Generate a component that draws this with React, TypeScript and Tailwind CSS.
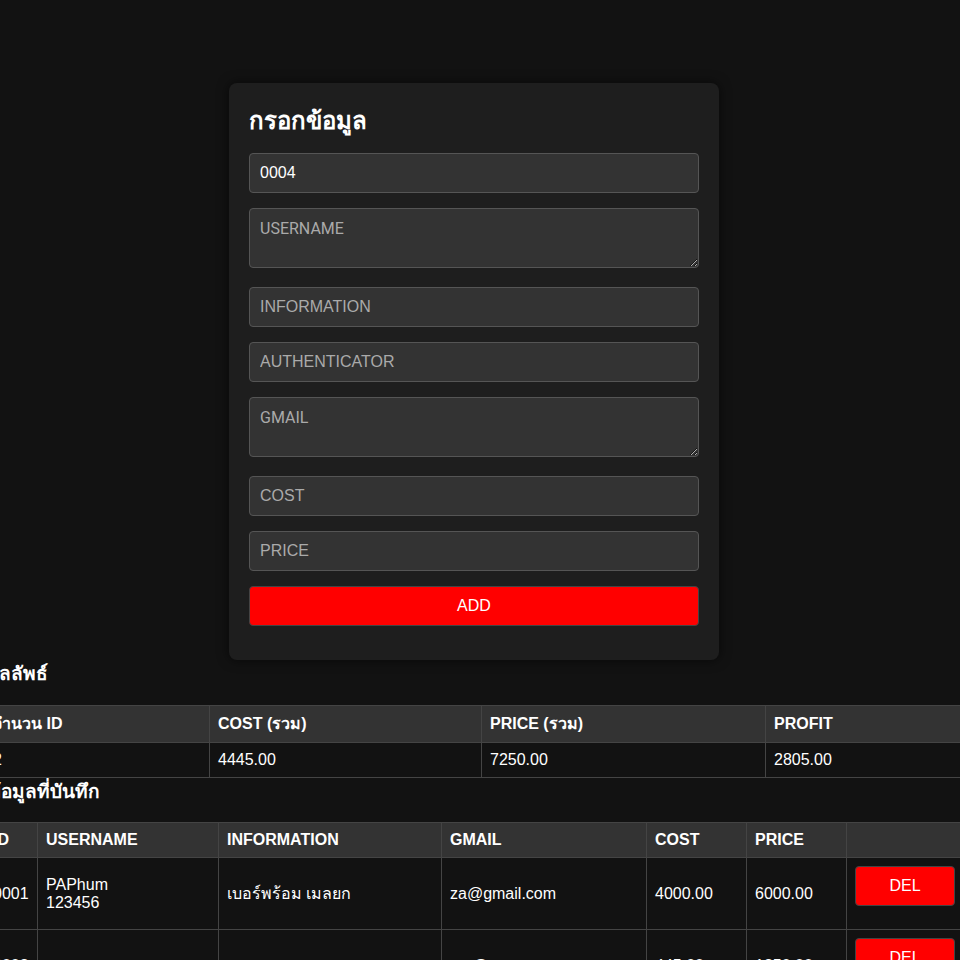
const summary = { count: "2", cost: "4445.00", price: "7250.00", profit: "2805.00" };

const records = [
  {
    id: "0001",
    username: "PAPhum\n123456",
    information: "เบอร์พร้อม เมลยก",
    gmail: "za@gmail.com",
    cost: "4000.00",
    price: "6000.00",
  },
  {
    id: "0002",
    username: "ruaman",
    information: "เมล",
    gmail: "ma@am.co",
    cost: "445.00",
    price: "1250.00",
  },
];

const inputCls =
  "mb-[15px] block h-[40px] w-[450px] rounded-[4px] border border-[#555] bg-[#333] px-[10px] text-[16px] text-white outline-none placeholder:text-[#aaa]";
const areaCls =
  "mb-[19px] block h-[60px] w-[450px] rounded-[4px] border border-[#555] bg-[#333] px-[10px] py-[10px] font-['Roboto'] text-[16px] leading-[20px] text-white outline-none placeholder:text-[#aaa]";

const th = "border border-[#444] bg-[#333] px-2 py-2 text-left font-bold align-middle";
const td = "border border-[#444] px-2 py-2 align-middle";

const App = () => {
  return (
    <div
      className="min-h-screen w-full overflow-x-hidden bg-[#121212] text-white"
      style={{ fontFamily: '"Liberation Sans", Arial, "Noto Sans", "DejaVu Sans", sans-serif' }}
    >
      <div className="flex w-[948px] flex-col items-center pt-[83px] pb-10">
        {/* FORM CARD */}
        <div className="w-[490px] shrink-0 rounded-[8px] bg-[#1e1e1e] px-5 pt-5 pb-[19px] shadow-[0_0_12px_rgba(0,0,0,0.6)]">
          <h2 className="mb-[15px] h-[35px] text-[24px] leading-[35px] font-bold">กรอกข้อมูล</h2>
          <input className={inputCls} defaultValue="0004" />
          <textarea className={areaCls} placeholder="USERNAME" />
          <input className={inputCls} placeholder="INFORMATION" />
          <input className={inputCls} placeholder="AUTHENTICATOR" />
          <textarea className={areaCls} placeholder="GMAIL" />
          <input className={inputCls} placeholder="COST" />
          <input className={inputCls} placeholder="PRICE" />
          <button className="mb-[15px] block h-[40px] w-[450px] rounded-[4px] border border-[#444] bg-[#ff0000] text-[16px] text-white">
            ADD
          </button>
        </div>

        {/* SUMMARY */}
        <div className="w-[980px] shrink-0">
          <h3 className="mb-[18px] h-[27px] pl-1 text-[19px] leading-[27px] font-bold">ผลลัพธ์</h3>
          <table className="w-[980px] table-fixed border-collapse text-[16px] leading-[18px]">
            <thead>
              <tr>
                <th className={`${th} w-[225px] leading-[20px]`}>จำนวน ID</th>
                <th className={`${th} w-[272px] leading-[20px]`}>COST (รวม)</th>
                <th className={`${th} w-[284px] leading-[20px]`}>PRICE (รวม)</th>
                <th className={`${th} w-[199px] leading-[20px]`}>PROFIT</th>
              </tr>
            </thead>
            <tbody>
              <tr>
                <td className={td}>{summary.count}</td>
                <td className={td}>{summary.cost}</td>
                <td className={td}>{summary.price}</td>
                <td className={td}>{summary.profit}</td>
              </tr>
            </tbody>
          </table>
        </div>

        {/* RECORDS */}
        <div className="w-[980px] shrink-0">
          <h3 className="mb-[17px] h-[27px] pl-1 text-[19px] leading-[27px] font-bold">ข้อมูลที่บันทึก</h3>
          <table className="w-[980px] table-fixed border-collapse text-[16px] leading-[18px]">
            <thead>
              <tr>
                <th className={`${th} w-[53px]`}>ID</th>
                <th className={`${th} w-[181px]`}>USERNAME</th>
                <th className={`${th} w-[223px]`}>INFORMATION</th>
                <th className={`${th} w-[205px]`}>GMAIL</th>
                <th className={`${th} w-[100px]`}>COST</th>
                <th className={`${th} w-[100px]`}>PRICE</th>
                <th className={`${th} w-[118px]`}></th>
              </tr>
            </thead>
            <tbody>
              {records.map((r) => (
                <tr key={r.id}>
                  <td className={td}>{r.id}</td>
                  <td className={`${td} whitespace-pre-line`}>{r.username}</td>
                  <td className={td}>{r.information}</td>
                  <td className={td}>{r.gmail}</td>
                  <td className={td}>{r.cost}</td>
                  <td className={td}>{r.price}</td>
                  <td className={`${td} align-top`}>
                    <button className="mb-[15px] block h-[40px] w-[100px] rounded-[4px] border border-[#444] bg-[#ff0000] text-[16px] text-white">
                      DEL
                    </button>
                  </td>
                </tr>
              ))}
            </tbody>
          </table>
        </div>
      </div>
    </div>
  );
};

export default App;
